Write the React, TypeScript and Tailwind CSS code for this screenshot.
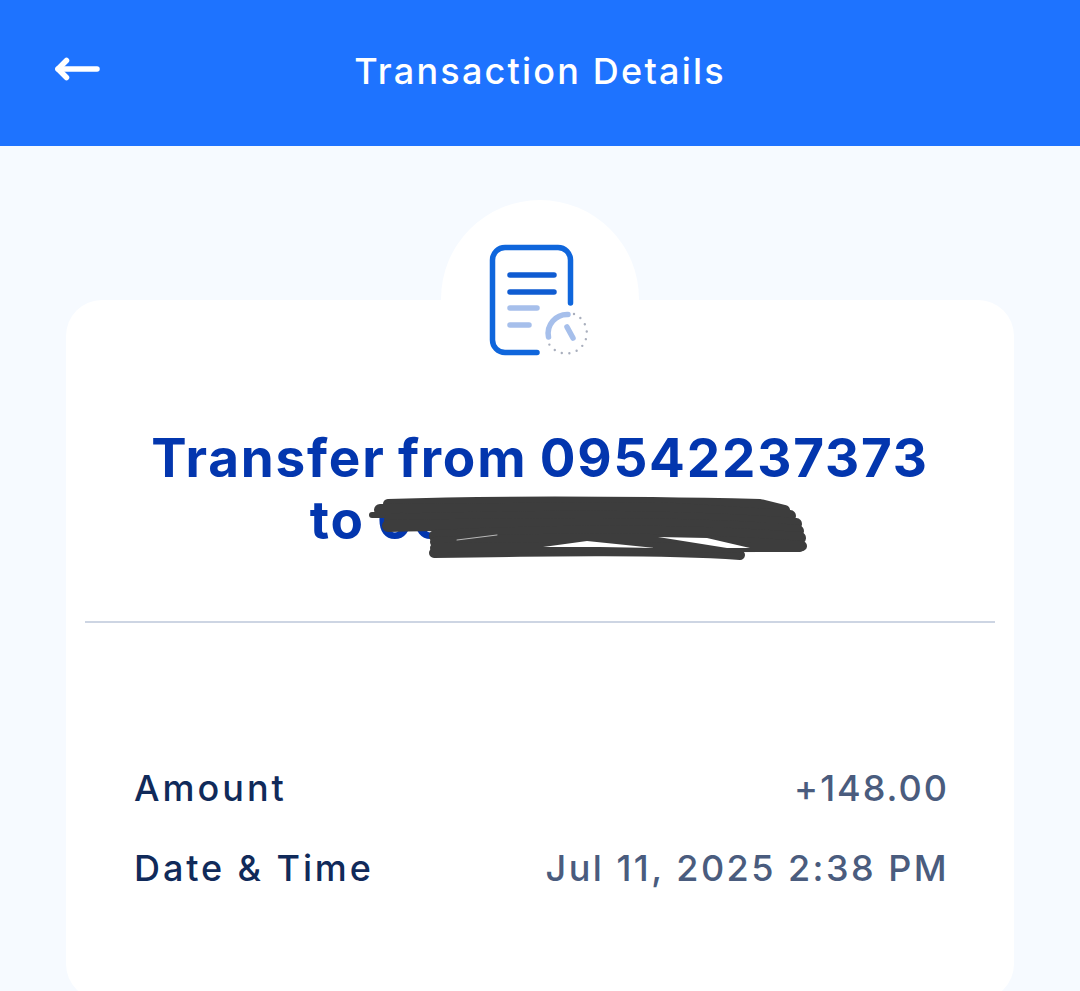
export default function App() {
  return (
    <div className="h-[991px] overflow-hidden bg-[#f6faff] font-['Inter','Liberation_Sans',sans-serif]">
      <header className="relative flex h-[146px] items-center justify-center bg-[#1e73ff]">
        <svg className="absolute left-[50px] top-[54px] h-[30px] w-[54px]" viewBox="0 0 54 30" fill="none" stroke="#ffffff" strokeWidth="5.5" strokeLinecap="round" strokeLinejoin="round">
          <path d="M47 15H8" />
          <path d="M16.5 6.5L8 15l8.5 8.5" />
        </svg>
        <h1 className="pb-[4px] text-[36px] font-medium leading-none tracking-[2.2px] text-white">Transaction Details</h1>
      </header>
      <main className="relative mx-[66px] mt-[154px] h-[700px] rounded-[36px] bg-white px-[19px] pt-[127px]">
        <div className="absolute left-1/2 top-[-100px] flex h-[200px] w-[198px] -translate-x-1/2 justify-center rounded-full bg-white pt-[40px]">
          <svg className="h-[125px] w-[120px]" viewBox="0 0 120 125" fill="none" strokeLinecap="round">
            <path d="M90.5 63V20A12.5 12.5 0 0 0 78 7.5H25A12.5 12.5 0 0 0 12.5 20V100A12.5 12.5 0 0 0 25 112.5H57" stroke="#0f66dc" strokeWidth="5.5" />
            <path d="M30 35H74M30 52H74" stroke="#0f5cd2" strokeWidth="5.5" />
            <path d="M30 68H57M30 85H49" stroke="#a6bfeb" strokeWidth="5.5" />
            <path d="M68.5 97A19 19 0 0 1 88 74.5M87 87L93 98" stroke="#a6bfeb" strokeWidth="5.5" />
            <path d="M94 74A20.5 20.5 0 1 1 69 104" stroke="#a9afbd" strokeWidth="2.4" strokeDasharray="0 7.6" />
          </svg>
        </div>
        <h2 className="relative text-center text-[53px] font-bold leading-[62px] tracking-[1.8px] text-[#0336ae] [word-spacing:-2px]">
          Transfer from 09542237373
          <br />
          to <span className="tracking-[0px]">00000000000</span>
          <svg className="absolute left-[275px] top-[63px] h-[75px] w-[450px]" viewBox="0 0 450 75" fill="none" stroke="#3d3d3d" strokeLinecap="round" strokeLinejoin="round" strokeWidth="10">
            <path d="M28 14C120 11 260 11 400 14L425 20" />
            <path d="M20 20L300 18L430 26" strokeWidth="12" />
            <path d="M12 25H40" strokeWidth="6" />
            <path d="M30 30C150 26 300 24 436 34" strokeWidth="12" />
            <path d="M28 36C150 34 330 31 438 41" strokeWidth="12" />
            <path d="M75 46C200 40 330 40 440 48" strokeWidth="12" />
            <path d="M75 52C200 47 330 47 442 56" />
            <path d="M74 63C200 61 300 60 380 65" />
            <path d="M75 58L440 57" strokeWidth="10" />
            <path d="M183 57L227 51L295 58L240 57Z" fill="#ffffff" stroke="none" />
            <path d="M298 47L347 48L390 58L367 58Z" fill="#ffffff" stroke="none" />
            <path d="M97 50L137 45" stroke="#d8d8d8" strokeWidth="0.8" />
          </svg>
        </h2>
        <hr className="mt-[70px] h-[2px] border-0 bg-[#cdd5e3]" />
        <dl className="flex flex-col gap-[34px] px-[49px] pt-[142px] text-[36px] font-medium leading-[46px]">
          <div className="flex justify-between">
            <dt className="tracking-[3px] text-[#102a5a]">Amount</dt>
            <dd className="mr-[-3px] tracking-[2px] text-[#4a5c7e]">+148.00</dd>
          </div>
          <div className="flex justify-between">
            <dt className="tracking-[2.9px] text-[#102a5a]">Date &amp; Time</dt>
            <dd className="mr-[-3px] tracking-[2.45px] text-[#4a5c7e]">Jul 11, 2025 2:38 PM</dd>
          </div>
        </dl>
      </main>
    </div>
  );
}
